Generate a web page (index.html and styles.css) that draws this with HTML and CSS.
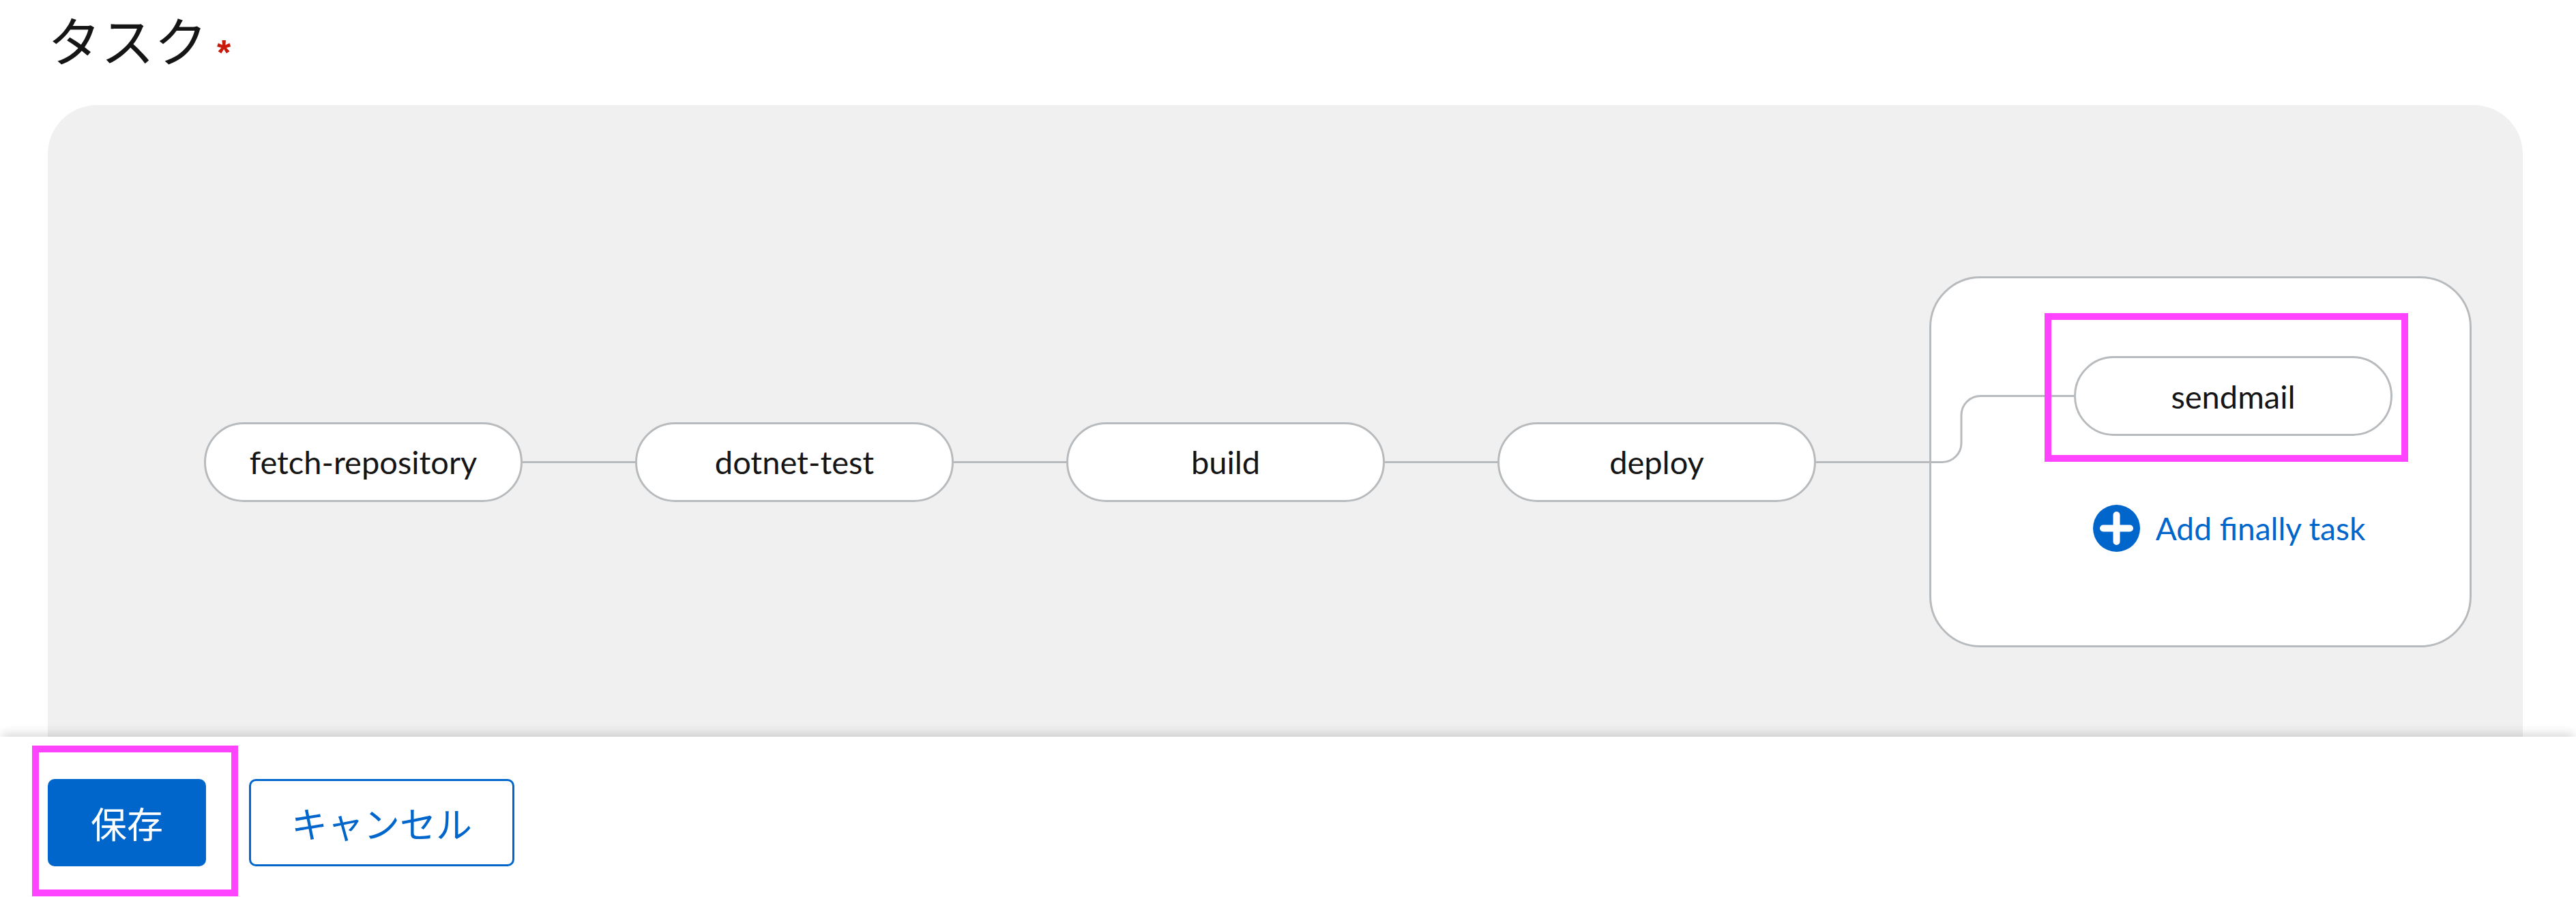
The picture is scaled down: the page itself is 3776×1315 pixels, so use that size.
FILE: index.html
```html
<!DOCTYPE html>
<html lang="ja">
<head>
<meta charset="utf-8">
<title>タスク</title>
<link rel="stylesheet" href="styles.css">
</head>
<body>
<div class="page">
  <main class="content">
    <h2 class="label">タスク<span class="req">*</span></h2>
    <section class="canvas">
      <div class="pipeline">
        <div class="node">fetch-repository</div>
        <div class="edge"></div>
        <div class="node">dotnet-test</div>
        <div class="edge"></div>
        <div class="node">build</div>
        <div class="edge"></div>
        <div class="node">deploy</div>
        <div class="edge edge-finally"></div>
        <div class="finally">
          <svg class="finally-edge" width="215" height="300" viewBox="0 0 215 300">
            <path d="M0 272.5 H19 A28 28 0 0 0 47 244.5 V203.5 A28 28 0 0 1 75 175.5 H212" fill="none" stroke="#b8bbbe" stroke-width="3"/>
          </svg>
          <div class="node">sendmail</div>
          <a class="add-finally">
            <svg class="add-icon" width="69" height="69" viewBox="0 0 69 69">
              <circle cx="34.5" cy="34.5" r="34.5" fill="#0066cc"/>
              <path d="M34.5 15 V54 M15 34.5 H54" stroke="#ffffff" stroke-width="10" stroke-linecap="round"/>
            </svg>
            <span>Add finally task</span>
          </a>
          <div class="mark mark-sendmail"></div>
        </div>
      </div>
    </section>
  </main>
  <footer class="footer">
    <button class="btn btn-primary">保存</button>
    <button class="btn btn-secondary">キャンセル</button>
    <div class="mark mark-save"></div>
  </footer>
</div>
</body>
</html>
```

FILE: styles.css
```css
html, body {
  margin: 0;
  padding: 0;
  background: #ffffff;
}

body {
  width: 3776px;
  height: 1315px;
  overflow: hidden;
  font-family: Lato, "Noto Sans CJK JP", sans-serif;
  color: #151515;
}

.content {
  height: 1080px;
  box-sizing: border-box;
  padding: 0 78px 0 70px;
}

.label {
  margin: 0;
  height: 104px;
  box-sizing: border-box;
  padding-top: 10px;
  font-family: "Noto Sans CJK JP", sans-serif;
  font-weight: 400;
  font-size: 78px;
  line-height: 94px;
  white-space: nowrap;
}

.req {
  color: #c9190b;
  font-family: "Liberation Sans", sans-serif;
  font-weight: 700;
  font-size: 52px;
  margin-left: 14px;
  position: relative;
  top: 4px;
}

.canvas {
  margin-top: 50px;
  height: 926px;
  box-sizing: border-box;
  background: #f0f0f0;
  border-radius: 72px 72px 0 0;
  padding: 251px 0 0 229px;
}

.pipeline {
  display: flex;
  align-items: center;
}

.node {
  flex: none;
  width: 467px;
  height: 117px;
  box-sizing: border-box;
  border: 3px solid #b8bbbe;
  border-radius: 59px;
  background: #ffffff;
  display: flex;
  align-items: center;
  justify-content: center;
  font-size: 47px;
  color: #151515;
  position: relative;
}

.edge {
  flex: none;
  width: 165px;
  height: 3px;
  background: #b8bbbe;
}

.edge-finally {
  width: 166px;
}

.finally {
  flex: none;
  position: relative;
  width: 795px;
  height: 544px;
  box-sizing: border-box;
  border: 3px solid #b8bbbe;
  border-radius: 75px;
  background: #ffffff;
  display: flex;
  flex-direction: column;
  align-items: center;
  padding: 114px 113px 0 209px;
}

.finally-edge {
  position: absolute;
  left: -3px;
  top: -3px;
}

.add-finally {
  margin-top: 101px;
  margin-right: 12px;
  display: flex;
  align-items: center;
  gap: 23px;
  height: 69px;
  color: #0066cc;
  font-size: 46px;
  text-decoration: none;
  white-space: nowrap;
}

.add-icon {
  flex: none;
  display: block;
}

.mark {
  position: absolute;
  box-sizing: border-box;
  border: 10px solid #ff44ff;
  pointer-events: none;
}

.mark-sendmail {
  left: 166px;
  top: 51px;
  width: 533px;
  height: 218px;
}

.footer {
  position: relative;
  height: 235px;
  box-sizing: border-box;
  background: #ffffff;
  box-shadow: 0 -7px 14px -3px rgba(3, 3, 3, 0.16);
  padding: 62px 0 0 70px;
  display: flex;
  align-items: flex-start;
  gap: 63px;
}

.btn {
  height: 128px;
  box-sizing: border-box;
  border: 3px solid transparent;
  border-radius: 10px;
  padding: 0 60px;
  font-family: "Noto Sans CJK JP", sans-serif;
  font-size: 53px;
  line-height: 1;
  display: flex;
  align-items: center;
  justify-content: center;
  cursor: pointer;
}

.btn-primary {
  background: #0066cc;
  color: #ffffff;
}

.btn-secondary {
  background: #ffffff;
  color: #0066cc;
  border-color: #0066cc;
  padding: 0 59px;
}

.mark-save {
  left: 47px;
  top: 13px;
  width: 302px;
  height: 221px;
}
```
